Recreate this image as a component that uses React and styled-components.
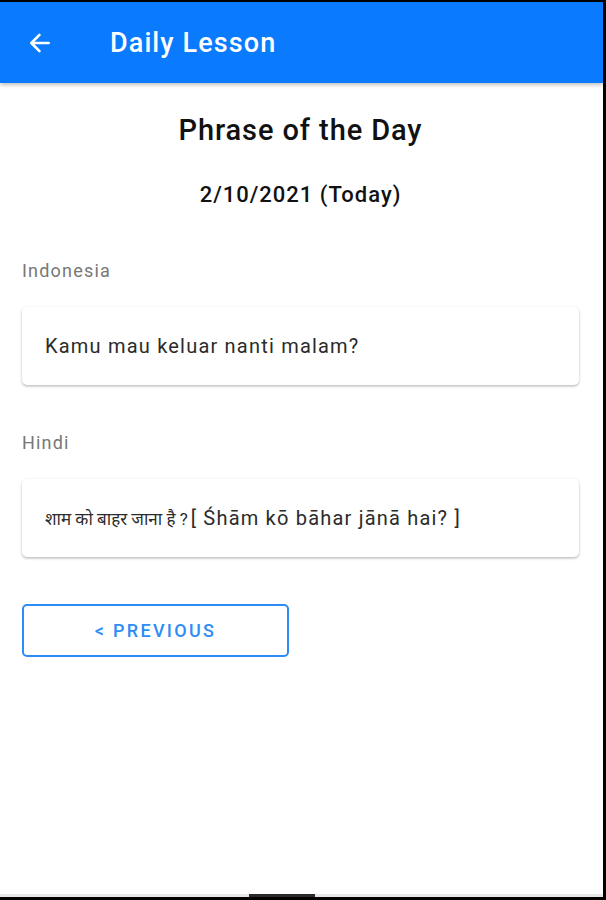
import React from "react";
import styled, { createGlobalStyle } from "styled-components";

const GlobalStyle = createGlobalStyle`
  html, body {
    margin: 0;
    padding: 0;
    background: #000;
  }
  body {
    font-family: Roboto, "Noto Sans", "Liberation Sans", sans-serif;
  }
`;

const Screen = styled.div`
  width: 603px;
  height: 895px;
  margin-top: 2px;
  background: #ffffff;
  display: flex;
  flex-direction: column;
  overflow: hidden;
`;

const AppBar = styled.header`
  height: 81px;
  background: #0a7bff;
  display: flex;
  align-items: center;
  padding-left: 26px;
  gap: 56px;
  box-shadow: 0 2px 4px rgba(0, 0, 0, 0.25);
  position: relative;
  z-index: 1;
`;

const BackButton = styled.button`
  border: none;
  background: none;
  padding: 0;
  width: 28px;
  height: 28px;
  display: flex;
  align-items: center;
  justify-content: center;
  color: #fff;
`;

const Title = styled.h1`
  margin: 0;
  color: #fff;
  font-size: 27px;
  font-weight: 500;
  letter-spacing: 1.1px;
`;

const Content = styled.main`
  flex: 1;
  padding: 27px 24px 0 22px;
  display: flex;
  flex-direction: column;
`;

const Heading = styled.h2`
  margin: 0;
  text-align: center;
  font-size: 29px;
  font-weight: 500;
  letter-spacing: 0.9px;
  color: #111;
  line-height: 40px;
`;

const DateLine = styled.p`
  margin: 31px 0 0;
  text-align: center;
  font-size: 22px;
  font-weight: 500;
  letter-spacing: 1px;
  color: #111;
  line-height: 28px;
`;

const Section = styled.section`
  margin-top: ${(p) => p.$top}px;
  display: flex;
  flex-direction: column;
  gap: 24px;
`;

const Label = styled.span`
  font-size: 18px;
  letter-spacing: 1.2px;
  color: #777;
  line-height: 24px;
`;

const Card = styled.div`
  height: 78px;
  background: #fff;
  border-radius: 5px;
  box-shadow: 0 1px 3px rgba(0, 0, 0, 0.22), 0 2px 2px rgba(0, 0, 0, 0.08);
  display: flex;
  align-items: center;
  padding: 0 23px;
  font-size: 20px;
  letter-spacing: 1.2px;
  color: #2b2b2b;
  white-space: nowrap;
`;

const Script = styled.span`
  font-size: 17px;
  letter-spacing: 0;
  margin-right: 3px;
`;

const OutlineButton = styled.button`
  margin-top: 47px;
  width: 267px;
  height: 53px;
  border: 2px solid #2d8cf5;
  border-radius: 5px;
  background: #fff;
  color: #2d8cf5;
  font-family: inherit;
  font-size: 18px;
  font-weight: 500;
  letter-spacing: 2.3px;
  text-transform: uppercase;
`;

const BottomBar = styled.div`
  margin-top: auto;
  height: 3px;
  background: #e8e8e8;
  display: flex;
  justify-content: center;
`;

const HomeIndicator = styled.div`
  width: 66px;
  height: 3px;
  background: #2a2a2a;
  margin-right: 40px;
`;

const BackArrow = () => (
  <svg width="26" height="26" viewBox="0 0 24 24" fill="none">
    <path
      d="M20 12H4.5M11.5 4.5L4 12l7.5 7.5"
      stroke="currentColor"
      strokeWidth="2.4"
      strokeLinecap="round"
      strokeLinejoin="round"
    />
  </svg>
);

const phrases = [
  { lang: "Indonesia", text: "Kamu mau keluar nanti malam?", top: 50 },
  {
    lang: "Hindi",
    script: "शाम को बाहर जाना है ?",
    text: "[ Śhām kō bāhar jānā hai? ]",
    top: 46,
  },
];

export default function App() {
  return (
    <>
      <GlobalStyle />
      <Screen>
        <AppBar>
          <BackButton aria-label="Back">
            <BackArrow />
          </BackButton>
          <Title>Daily Lesson</Title>
        </AppBar>
        <Content>
          <Heading>Phrase of the Day</Heading>
          <DateLine>2/10/2021 (Today)</DateLine>
          {phrases.map((p) => (
            <Section key={p.lang} $top={p.top}>
              <Label>{p.lang}</Label>
              <Card>
                {p.script && <Script>{p.script}</Script>}
                {p.text}
              </Card>
            </Section>
          ))}
          <OutlineButton>&lt; Previous</OutlineButton>
        </Content>
        <BottomBar>
          <HomeIndicator />
        </BottomBar>
      </Screen>
    </>
  );
}
